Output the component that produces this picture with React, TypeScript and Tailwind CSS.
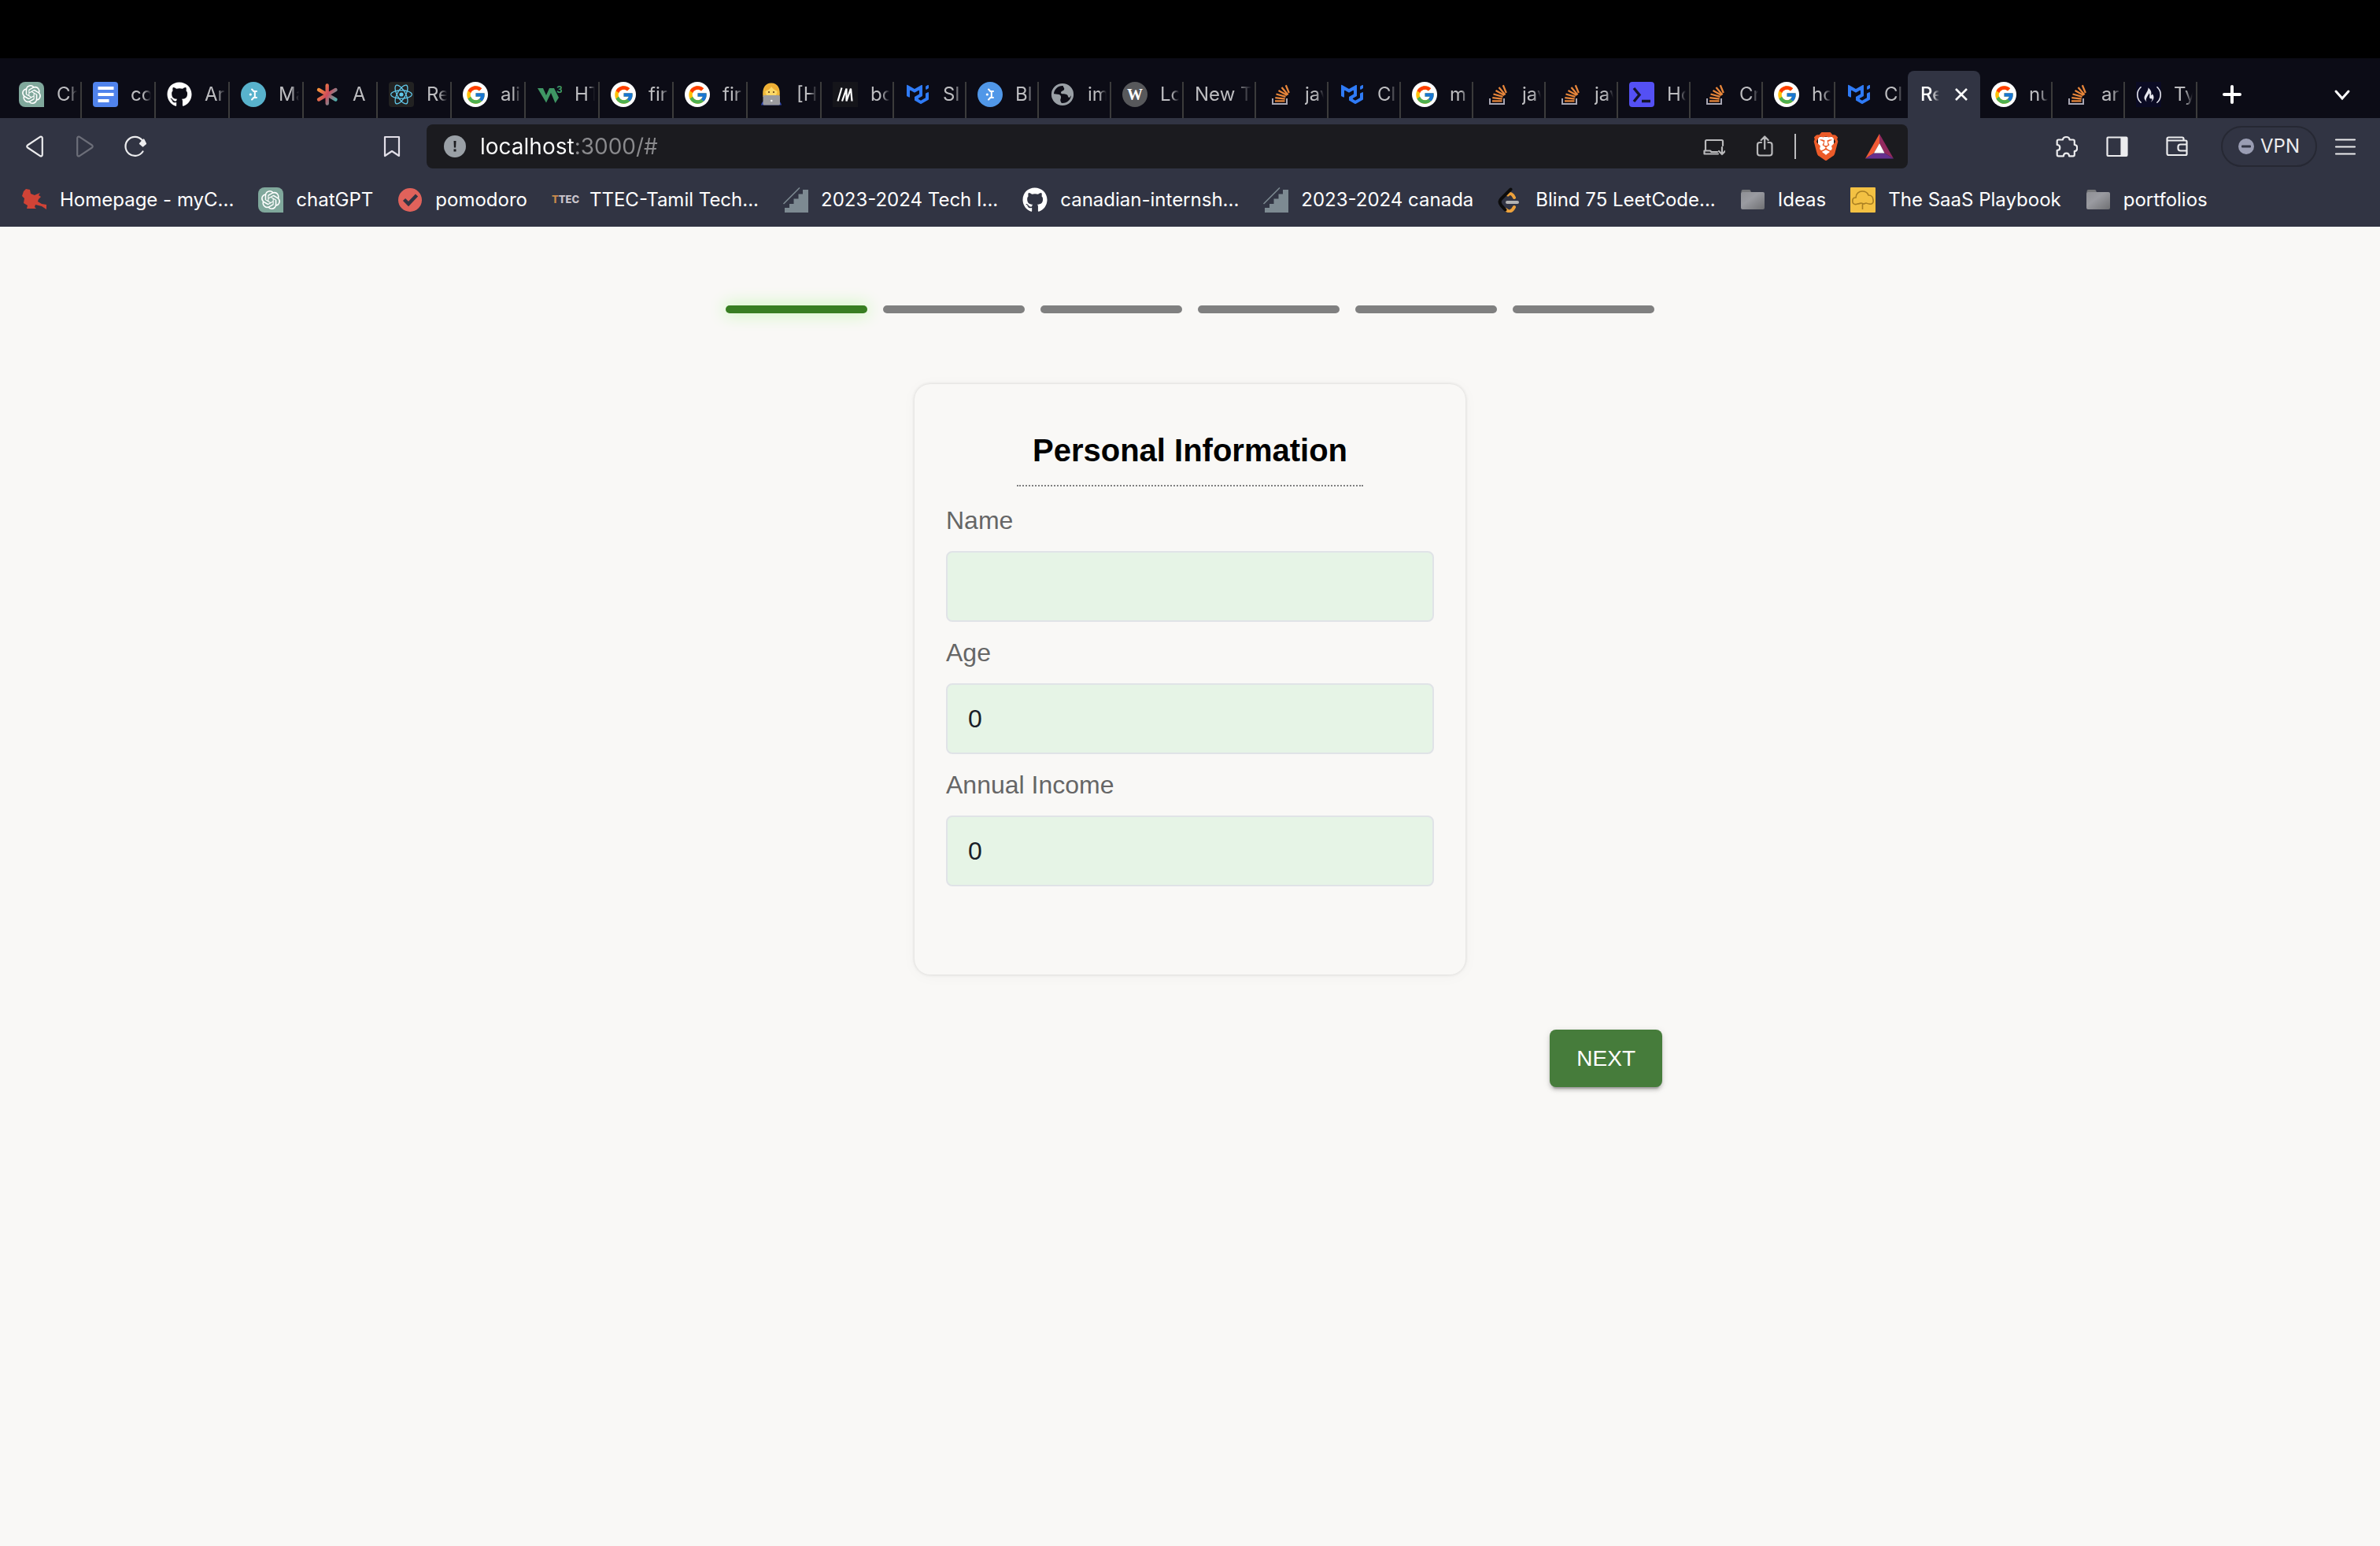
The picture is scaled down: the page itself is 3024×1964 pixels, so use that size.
import type { ReactNode } from "react";
import { useState } from "react";
import { FaGithub } from "react-icons/fa";
import { FcGoogle } from "react-icons/fc";
import { SiBrave, SiFreecodecamp, SiMui, SiOpenai, SiReact } from "react-icons/si";

/* ---------- favicons ---------- */

function OpenAiIcon() {
  return (
    <span className="grid size-8 flex-none place-items-center rounded-lg rounded-br-none bg-[#80a89c]">
      <SiOpenai className="size-6 text-white" />
    </span>
  );
}

function DocsIcon() {
  return (
    <svg className="size-8 flex-none" viewBox="0 0 32 32">
      <rect width="32" height="32" rx="4" fill="#5083ec" />
      <path d="M6.500 6h20v4h-20zM6.500 14h20v4h-20zM6.500 22h14v4h-14z" fill="#fff" />
    </svg>
  );
}

function GithubIcon() {
  return <FaGithub className="size-8 flex-none text-white" />;
}

function GoogleIcon() {
  return (
    <span className="grid size-8 flex-none place-items-center rounded-full bg-white">
      <FcGoogle className="size-[27px]" />
    </span>
  );
}

function MuiIcon() {
  return (
    <span className="grid size-8 flex-none place-items-center">
      <SiMui className="size-7 text-[#2f7bf6]" />
    </span>
  );
}

function BeamIcon({ fill }: { fill: string }) {
  return (
    <svg className="size-8 flex-none" viewBox="0 0 32 32" fill="none">
      <circle cx="16" cy="16" r="16" fill={fill} />
      <circle cx="12.300" cy="16" r="1.600" fill="#fff" />
      <path
        d="M14 9.500c1.200.6 1.500 2 2.500 2.500h3.500M17.800 12v8M14 22.500c1.200-.6 1.500-2 2.500-2.500h3.500"
        stroke="#fff"
        strokeWidth="2"
        strokeLinecap="round"
      />
    </svg>
  );
}

function StarIcon() {
  return (
    <svg className="size-8 flex-none" viewBox="0 0 32 32" fill="none">
      <defs>
        <linearGradient id="star" gradientUnits="userSpaceOnUse" x1="5" y1="8" x2="28" y2="22">
          <stop offset="0" stopColor="#f7923a" />
          <stop offset="0.500" stopColor="#cf4a5c" />
          <stop offset="1" stopColor="#4fb3b0" />
        </linearGradient>
      </defs>
      <path
        d="M15.700 4.500l.01 23M5 10l21.500 12.500M5 22.500L26.500 10"
        stroke="url(#star)"
        strokeWidth="4.400"
        strokeLinecap="round"
      />
    </svg>
  );
}

function ReactIcon() {
  return (
    <span className="grid size-8 flex-none place-items-center rounded-sm bg-[#222]">
      <SiReact className="size-7 text-[#61c9ec]" />
    </span>
  );
}

function SchoolsIcon() {
  return (
    <svg className="size-8 flex-none" viewBox="0 0 32 32" fill="none">
      <path d="M1 8h7l4 9 4-9h6l6 12-4.500 7L18 14l-6 12.500z" fill="#3f9664" />
      <text x="25" y="14" fontSize="12" fontWeight="700" fill="#3f9664" fontFamily="Inter, sans-serif">
        3
      </text>
    </svg>
  );
}

function CoderIcon() {
  return (
    <svg className="size-8 flex-none" viewBox="0 0 32 32">
      <path d="M3 29.500c1-5 5-7.500 13-7.500s12 2.500 13 7.500z" fill="#3046a8" />
      <path d="M5.500 19C4 8 8 1.500 16 1.500S28 8 26.500 19z" fill="#f0b93a" />
      <ellipse cx="16" cy="12.500" rx="7.500" ry="7" fill="#fcd866" />
      <path d="M7.500 12c4-1 7.500-3 8.500-6 2 3 5 5 8.500 6l.5-5-5.500-4.500h-7L7.500 7z" fill="#eeae35" />
      <circle cx="13" cy="13" r="1.100" fill="#5b3a16" />
      <circle cx="19" cy="13" r="1.100" fill="#5b3a16" />
      <rect x="5.500" y="17" width="21.500" height="12.500" rx="1.500" fill="#9b9b9e" />
      <circle cx="16.300" cy="24" r="1.300" fill="#f1f1f1" />
    </svg>
  );
}

function SlashIcon() {
  return (
    <svg className="size-8 flex-none" viewBox="0 0 32 32" fill="none">
      <rect width="32" height="32" fill="#15151a" />
      <path d="M6.500 24.500l5-17M12 24.500l5.500-16v16l5.500-16 1.500 16" stroke="#fff" strokeWidth="2.200" />
    </svg>
  );
}

function GlobeIcon() {
  return (
    <svg className="size-8 flex-none" viewBox="0 0 32 32" fill="none">
      <circle cx="16" cy="16" r="12.600" stroke="#9aa0a6" strokeWidth="3" />
      <path
        d="M17 4c-1 3 2 3 1 6-1 2-4 1-4 4 0 2 5 1 7 2 3 1 1 4 4 4l3-4c0-6-4-11-11-12zM3.500 15c3 0 5 1 8 1 3 1 3 4 2 6-1 3 2 4 1 7C8 28 3 23 3.500 15z"
        fill="#9aa0a6"
      />
    </svg>
  );
}

function WordIcon() {
  return (
    <span className="grid size-8 flex-none place-items-center rounded-full bg-[#57585b] font-['Liberation_Serif',serif] text-xl font-bold text-white">
      W
    </span>
  );
}

function StackIcon() {
  return (
    <svg className="size-8 flex-none" viewBox="0 0 32 32" fill="none">
      <path d="M7 21v7h18v-7" stroke="#a8a6b3" strokeWidth="2" />
      <path
        d="M10 24.300h12.500M10.300 20.200l12.500 1.400M11.500 15.500l12 3.400M14.500 11l10.800 6M18.500 7l8 9.400M23.800 4.300l4 9.700"
        stroke="#e8863a"
        strokeWidth="2.300"
      />
    </svg>
  );
}

function TerminalIcon() {
  return (
    <svg className="size-8 flex-none" viewBox="0 0 32 32" fill="none">
      <rect width="32" height="32" rx="4" fill="#5450f4" />
      <path d="M6 8l7 8.500L6 25M16 24.500h11" stroke="#14142b" strokeWidth="3.400" />
    </svg>
  );
}

function CampIcon() {
  return (
    <span className="grid size-8 flex-none place-items-center bg-[#0a0a23]">
      <SiFreecodecamp className="size-[31px] text-[#e6e6ee]" />
    </span>
  );
}

function BirdIcon() {
  return (
    <svg className="size-8 flex-none" viewBox="0 0 32 32">
      <path
        d="M2 5l3-3 5 1 1 5 5 2 2-1 5-2-2 3 3 2-3 3-1 3 5 3 6 1v6l-6-4-8-2-1 3 2 2H6l1-4-5-3 1-6-3-3z"
        fill="#d04336"
      />
    </svg>
  );
}

function CheckIcon() {
  return (
    <svg className="size-8 flex-none" viewBox="0 0 32 32" fill="none">
      <circle cx="16" cy="16" r="15" fill="#e0625b" />
      <path d="M8.500 15.500l5.500 5.500L24.500 10" stroke="#313443" strokeWidth="4.400" />
    </svg>
  );
}

function TtecIcon() {
  return (
    <span className="w-8 flex-none text-center text-[13px] font-extrabold text-[#c9c4cc]">
      <span className="text-[#c98a4c]">T</span>TEC
    </span>
  );
}

function StairsIcon() {
  return (
    <svg className="size-8 flex-none" viewBox="0 0 32 32" fill="none">
      <path d="M2 32v-6h6v-5h5.500v-6.500h6v-6h5.500V3h7v29z" fill="#7d8a92" />
      <path d="M.5 21L21 .5" stroke="#7d8a92" strokeWidth="1.500" />
    </svg>
  );
}

function LeetIcon() {
  return (
    <svg className="size-8 flex-none" viewBox="0 0 32 32" fill="none" strokeWidth="4" strokeLinecap="round">
      <path d="M13 9.500c3-3 6-1 8 3.500M10 28c4 4 8 3 11-3" stroke="#eda23c" />
      <path d="M12 19h13" stroke="#b3b3b3" />
      <path d="M16.500 2.500L4.500 14.500c-3 3-2 6 0 8.500l5 5.500" stroke="#0c0c0c" />
    </svg>
  );
}

function FolderIcon() {
  return (
    <svg className="size-8 flex-none" viewBox="0 0 32 32">
      <defs>
        <linearGradient id="folder" x1="0" y1="0" x2="1" y2="1">
          <stop offset="0" stopColor="#8f9095" />
          <stop offset="0.400" stopColor="#9a9ba1" />
          <stop offset="1" stopColor="#6f7073" />
        </linearGradient>
      </defs>
      <path d="M1.500 5q0-2 2-2h8q2 0 2 2l1 3h-13z" fill="#77787b" />
      <rect x="1" y="6" width="30" height="22" rx="2" fill="url(#folder)" />
    </svg>
  );
}

function TreeIcon() {
  return (
    <svg className="size-8 flex-none" viewBox="0 0 32 32" fill="none">
      <rect width="32" height="32" rx="1" fill="#f3c143" />
      <path
        d="M9 21c-4 2-7-1-6-5 0-2 2-3 4-3 0-5 4-8 8-8 5 0 7 2 8 5 4 0 6 3 6 6 1 4-2 6-5 5-2 0-3-1-4-1s-2 1-3 1-2-1-3-1-3 1-5 1zM15.500 20v8"
        stroke="#a97f22"
        strokeWidth="1.600"
      />
    </svg>
  );
}

/* ---------- browser chrome ---------- */

type Tab = { icon?: ReactNode; title: string; active?: boolean; last?: boolean };

const wideTabs: Tab[] = [
  { icon: <OpenAiIcon />, title: "Ch" },
  { icon: <DocsIcon />, title: "co" },
  { icon: <GithubIcon />, title: "Ar" },
  { icon: <BeamIcon fill="#58b2cc" />, title: "Ma" },
  { icon: <StarIcon />, title: "A" },
  { icon: <ReactIcon />, title: "Re" },
  { icon: <GoogleIcon />, title: "ali" },
  { icon: <SchoolsIcon />, title: "HT" },
  { icon: <GoogleIcon />, title: "fir" },
  { icon: <GoogleIcon />, title: "fir" },
  { icon: <CoderIcon />, title: "[H" },
];

const tabs: Tab[] = [
  { icon: <SlashIcon />, title: "bo" },
  { icon: <MuiIcon />, title: "Sl" },
  { icon: <BeamIcon fill="#5097e8" />, title: "Bl" },
  { icon: <GlobeIcon />, title: "im" },
  { icon: <WordIcon />, title: "Lo" },
  { title: "New T" },
  { icon: <StackIcon />, title: "jav" },
  { icon: <MuiIcon />, title: "Cl" },
  { icon: <GoogleIcon />, title: "m" },
  { icon: <StackIcon />, title: "jav" },
  { icon: <StackIcon />, title: "jav" },
  { icon: <TerminalIcon />, title: "Ho" },
  { icon: <StackIcon />, title: "Cr" },
  { icon: <GoogleIcon />, title: "ho" },
  { icon: <MuiIcon />, title: "Cl", last: true },
  { title: "Re", active: true },
  { icon: <GoogleIcon />, title: "nu" },
  { icon: <StackIcon />, title: "ar" },
  { icon: <CampIcon />, title: "Ty" },
];

function TabItem({ tab, wide }: { tab: Tab; wide?: boolean }) {
  const width = wide ? "w-[94px]" : "w-[92px]";

  if (tab.active) {
    return (
      <div className={`flex h-[60px] ${width} flex-none items-center rounded-t-lg bg-[#313443] pr-4 pl-4`}>
        <span className="w-6 overflow-hidden font-medium whitespace-nowrap text-white [mask-image:linear-gradient(to_right,black_60%,transparent)]">
          {tab.title}
        </span>
        <button aria-label="Close tab" className="ml-auto">
          <svg className="size-4" viewBox="0 0 16 16" fill="none" stroke="#fff" strokeWidth="2.600">
            <path d="M1 1l14 14M15 1L1 15" />
          </svg>
        </button>
      </div>
    );
  }

  return (
    <div className={`flex h-[60px] ${width} flex-none items-center pl-[14px]`}>
      {tab.icon}
      <span
        className={`mr-1 min-w-0 flex-1 overflow-hidden whitespace-nowrap text-[#bdbdc0] ${
          tab.icon
            ? "ml-4 [mask-image:linear-gradient(to_right,black_60%,transparent)]"
            : "[mask-image:linear-gradient(to_right,black_70%,transparent)]"
        }`}
      >
        {tab.title}
      </span>
      <span className={`h-[46px] w-0.5 self-end ${tab.last ? "" : "bg-[#3b3b3b]"}`} />
    </div>
  );
}

function TabStrip() {
  return (
    <div className="flex h-[76px] items-end bg-[#0c0c16] pl-2.5 text-2xl">
      {wideTabs.map((tab, i) => (
        <TabItem key={i} tab={tab} wide />
      ))}
      {tabs.map((tab, i) => (
        <TabItem key={i} tab={tab} />
      ))}
      <button aria-label="New tab" className="mb-[18px] ml-8">
        <svg className="size-6" viewBox="0 0 24 24" fill="none" stroke="#fff" strokeWidth="4" strokeLinecap="round">
          <path d="M2 12h20M12 2v20" />
        </svg>
      </button>
      <button aria-label="Search tabs" className="mr-9 mb-[18px] ml-auto">
        <svg className="size-6" viewBox="0 0 24 24" fill="none" stroke="#fff" strokeWidth="3" strokeLinecap="round">
          <path d="M4 8l8 9 8-9" />
        </svg>
      </button>
    </div>
  );
}

function ToolButton({ label, children, className = "" }: { label: string; children: ReactNode; className?: string }) {
  return (
    <button aria-label={label} className={`flex-none ${className}`}>
      <svg
        className="size-7"
        viewBox="0 0 28 28"
        fill="none"
        stroke="currentColor"
        strokeWidth="2.200"
        strokeLinejoin="round"
        strokeLinecap="round"
      >
        {children}
      </svg>
    </button>
  );
}

function Toolbar() {
  const [url, setUrl] = useState("localhost:3000/#");

  return (
    <div className="flex h-[72px] items-center text-[#ececee]">
      <nav className="flex w-[542px] flex-none items-center gap-9 pr-[30px] pl-[30px]">
        <ToolButton label="Back">
          <path d="M21 1.800c1.800-.6 2.800.2 2.800 2v20.400c0 1.800-1 2.600-2.800 2L5 15.500c-1-.8-1-2.200 0-3z" />
        </ToolButton>
        <ToolButton label="Forward" className="text-[#6c6e79]">
          <path d="M7 1.800c-1.800-.6-2.800.2-2.800 2v20.400c0 1.800 1 2.600 2.800 2l16-10.700c1-.8 1-2.200 0-3z" />
        </ToolButton>
        <ToolButton label="Reload">
          <path d="M23.500 20.500A12 12 0 1 1 22.500 6" />
          <path d="M24.500 5.500l2.500 5-3.500 3-3.500-3z" fill="currentColor" />
        </ToolButton>
        <ToolButton label="Bookmark" className="ml-auto text-[#e2dfe8]">
          <path d="M5 2h18v24l-9-6-9 6z" />
        </ToolButton>
      </nav>

      <div className="flex h-14 min-w-0 flex-1 items-center rounded-lg bg-[#1b1b1f] pr-[18px] pl-[22px]">
        <svg className="size-7 flex-none" viewBox="0 0 28 28">
          <circle cx="14" cy="14" r="14" fill="#9aa0a6" />
          <path d="M12.500 7h3l-.4 8.500h-2.200zM12.500 17.500h3v3h-3z" fill="#1b1b1f" />
        </svg>
        <input
          aria-label="Address"
          value={url}
          onChange={(e) => setUrl(e.target.value)}
          className="ml-[18px] min-w-0 flex-1 bg-[linear-gradient(to_right,#ffffff_120px,#8a8a8d_120px)] bg-clip-text text-[28px] text-transparent outline-none"
        />
        <ToolButton label="Install" className="text-[#b9b9bb]">
          <path d="M3 19V7.500Q3 6 4.500 6h19Q25 6 25 7.500V13M1.500 19.500H9l1.500 1.500H18M1.500 19.500v4H19M24 15v9m-4-4l4 4 4-4" />
        </ToolButton>
        <ToolButton label="Share" className="ml-9 text-[#b9b9bb]">
          <path d="M10 9H8Q5 9 5 12v10.500q0 3 3 3h12.500q3 0 3-3V12q0-3-3-3h-2M14.200 17V1.500m-4.500 4.500l4.500-4.500L18.700 6" />
        </ToolButton>
        <span className="mr-5 ml-6 h-8 w-0.5 bg-[#bdbdbf]" />
        <button aria-label="Shields" className="relative grid flex-none place-items-center">
          <span className="absolute h-6 w-5 rounded-b-full bg-white" />
          <SiBrave className="relative size-9 text-[#ec5b29]" />
        </button>
        <button aria-label="Rewards" className="ml-8 flex-none">
          <svg className="h-8 w-9" viewBox="0 0 36 32">
            <path d="M18 0v12l-7 12.500L0 31.500z" fill="#f15a35" />
            <path d="M18 0v12l6.500 12.500L36 31.500z" fill="#932a5f" />
            <path d="M0 31.500l11-7h13.500l11.500 7z" fill="#65308f" />
            <path d="M18 12l-7 12.500h13.500z" fill="#fff" />
          </svg>
        </button>
      </div>

      <nav className="flex w-[600px] flex-none items-center justify-end pr-[30px]">
        <ToolButton label="Extensions">
          <path d="M3.500 5.500H9C9 .8 17.500.8 17.500 5.500H22q1.800 0 1.800 1.800V12c4.500 0 4.500 8 0 8v4.500q0 1.800-1.800 1.800h-5c0-5-7-5-7 0H3.500q-1.800 0-1.800-1.800V19c4.800 0 4.800-7 0-7V7.300q0-1.800 1.800-1.800z" />
        </ToolButton>
        <ToolButton label="Sidebar" className="ml-9">
          <rect x="1.500" y="2.500" width="25" height="23.500" rx="1" />
          <path d="M19.500 3h6v22.500h-6z" fill="currentColor" />
        </ToolButton>
        <ToolButton label="Wallet" className="ml-12">
          <path d="M26.500 11V8q0-1.500-1.500-1.500H2M22.500 6V4.500q0-2-2-2h-17q-2 0-2 2V23q0 2 2 2H25q1.500 0 1.500-1.500V20M26.500 11.500h-8q-3 0-3 3v2q0 3 3 3h8z" />
        </ToolButton>
        <button className="ml-[42px] flex h-[52px] w-[122px] items-center gap-2 rounded-full border-2 border-[#262833] pl-5 text-2xl">
          <svg className="size-5 flex-none" viewBox="0 0 20 20">
            <circle cx="10" cy="10" r="10" fill="#9a9db3" />
            <rect x="4" y="8.500" width="12" height="3" rx="1" fill="#313443" />
          </svg>
          VPN
        </button>
        <ToolButton label="Menu" className="ml-[22px]">
          <path d="M2 5.500h24M2 14.500h24M2 23.500h24" />
        </ToolButton>
      </nav>
    </div>
  );
}

const bookmarks = [
  { icon: <BirdIcon />, title: "Homepage - myC..." },
  { icon: <OpenAiIcon />, title: "chatGPT" },
  { icon: <CheckIcon />, title: "pomodoro" },
  { icon: <TtecIcon />, title: "TTEC-Tamil Tech..." },
  { icon: <StairsIcon />, title: "2023-2024 Tech I..." },
  { icon: <GithubIcon />, title: "canadian-internsh..." },
  { icon: <StairsIcon />, title: "2023-2024 canada" },
  { icon: <LeetIcon />, title: "Blind 75 LeetCode..." },
  { icon: <FolderIcon />, title: "Ideas" },
  { icon: <TreeIcon />, title: "The SaaS Playbook" },
  { icon: <FolderIcon />, title: "portfolios" },
];

function BookmarksBar() {
  return (
    <div className="flex h-[66px] items-center gap-[31px] pb-0.5 pl-7 text-2xl whitespace-nowrap text-white">
      {bookmarks.map((b) => (
        <a key={b.title} href="#" className="flex flex-none items-center gap-4">
          {b.icon}
          {b.title}
        </a>
      ))}
    </div>
  );
}

/* ---------- page ---------- */

function Field({ id, label, initial, type = "text" }: { id: string; label: string; initial: string; type?: string }) {
  const [value, setValue] = useState(initial);

  return (
    <div className="mt-5">
      <label htmlFor={id} className="block text-[32px] leading-[38px] text-[#666]">
        {label}
      </label>
      <input
        id={id}
        type={type}
        value={value}
        onChange={(e) => setValue(e.target.value)}
        className="mt-5 h-[90px] w-full rounded-lg border-2 border-[#e0e3e7] bg-[#e6f4e6] px-[26px] text-[32px] text-[#1a2027] outline-none"
      />
    </div>
  );
}

function Progress({ step, total }: { step: number; total: number }) {
  return (
    <div className="flex gap-5 px-2.5">
      {Array.from({ length: total }, (_, i) => (
        <span
          key={i}
          className={`h-2.5 flex-1 rounded-[5px] ${
            i < step ? "bg-[#387e22] shadow-[0_0_20px_2px_#ccf8bb]" : "bg-[#808080]"
          }`}
        />
      ))}
    </div>
  );
}

export default function App() {
  return (
    <div className="flex min-h-screen flex-col bg-[#f9f8f6] font-[Inter,sans-serif]">
      <header className="bg-[#313443]">
        <div className="h-[74px] bg-black" />
        <TabStrip />
        <Toolbar />
        <BookmarksBar />
      </header>

      <main className="mx-auto flex w-full max-w-[1200px] flex-col pt-[100px] font-['Liberation_Sans',Arial,sans-serif]">
        <Progress step={1} total={6} />

        <form className="mx-auto mt-[90px] w-full max-w-[700px] rounded-[20px] px-10 pt-[60px] pb-28 shadow-[0_0_4px_rgba(0,0,0,0.14),0_2px_20px_rgba(0,0,0,0.03)]">
          <h1 className="mx-auto mb-6 w-fit border-b-2 border-dotted border-[#808080] px-5 pb-5 text-center text-[40px] leading-[48px] font-bold text-black">
            Personal Information
          </h1>
          <Field id="name" label="Name" initial="" />
          <Field id="age" label="Age" initial="0" />
          <Field id="income" label="Annual Income" initial="0" />
        </form>

        <button className="mt-[70px] self-end rounded-lg bg-[#467c3b] px-[34px] py-4 text-[28px] leading-[41px] text-white shadow-[0_6px_2px_-4px_rgba(0,0,0,0.2),0_4px_4px_rgba(0,0,0,0.14),0_2px_10px_rgba(0,0,0,0.12)]">
          NEXT
        </button>
      </main>
    </div>
  );
}
